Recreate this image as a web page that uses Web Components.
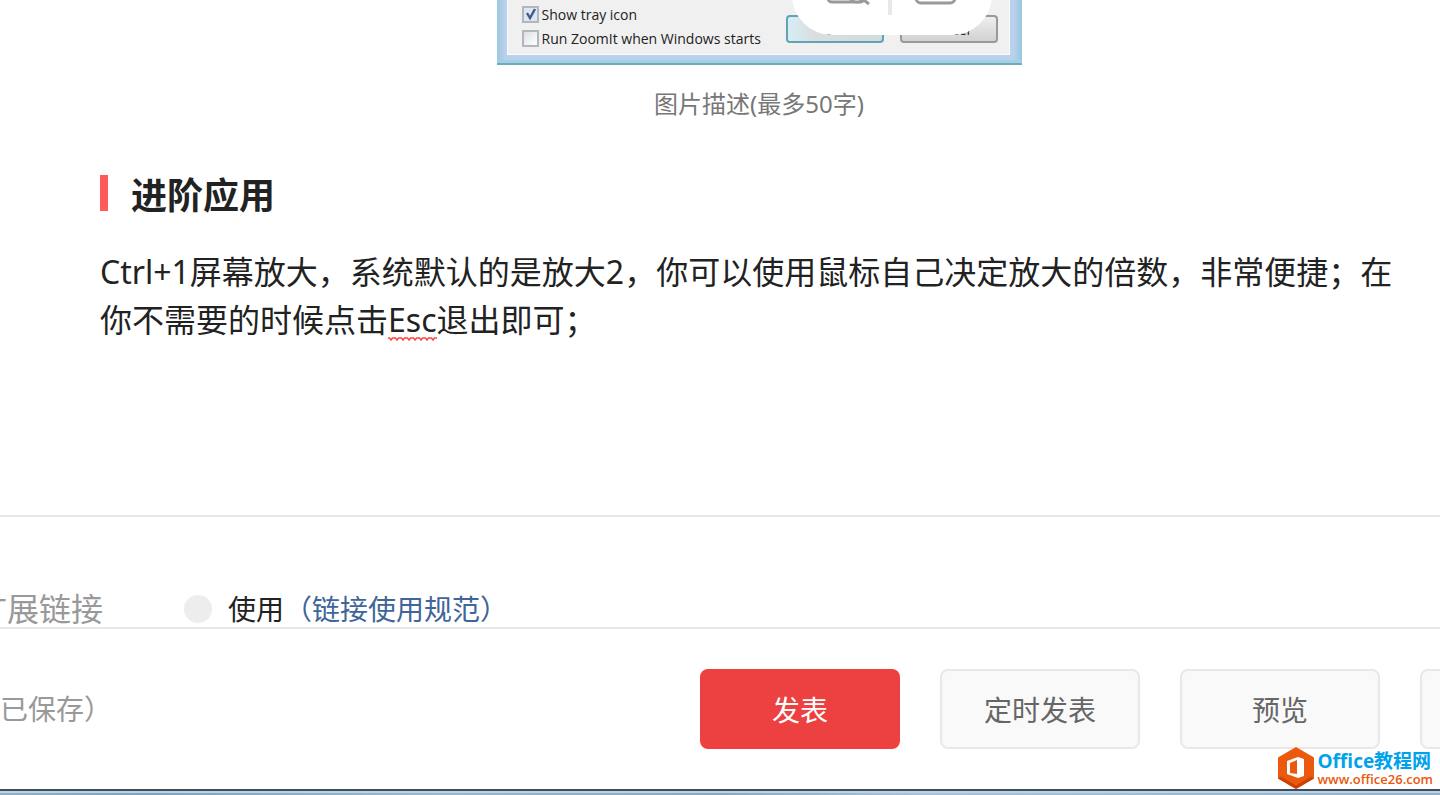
<!DOCTYPE html>
<html lang="zh-CN">
<head>
<meta charset="utf-8">
<title>进阶应用</title>
<style>
  html, body { height: 100%; }
  body {
    margin: 0;
    overflow: hidden;
    background: #fff;
    color: #222;
    font-family: "Noto Sans", "Noto Sans CJK SC", sans-serif;
    text-spacing-trim: space-all;
  }
</style>
</head>
<body>

<template id="editor-page">
  <style>
    :host {
      position: relative;
      display: flex;
      flex-direction: column;
      min-height: 100%;
      overflow: hidden;
    }
    main { flex: 1; padding: 0 22px 0 100px; }
  </style>
  <main><slot></slot></main>
  <slot name="link"></slot>
  <slot name="footer"></slot>
  <slot name="mark"></slot>
</template>

<template id="image-figure">
  <style>
    :host { display: block; }
    figure { margin: 0; display: flex; flex-direction: column; align-items: center; }
    figcaption { margin-top: 21px; font-size: 24px; line-height: 36px; color: #777; }
  </style>
  <figure>
    <slot></slot>
    <figcaption><slot name="caption"></slot></figcaption>
  </figure>
</template>

<template id="zoom-dialog">
  <style>
    :host {
      position: relative;
      display: block;
      box-sizing: border-box;
      width: 525px;
      height: 65px;
      padding: 0 12px 8px 10px;
      background: linear-gradient(90deg, #9cc9e0, #b9d1ea 8px, #b9d1ea 517px, #9cc9e0 523px);
      border-bottom: 2px solid #6cacc0;
      box-shadow: inset 0 -3px #a5cfe2;
      font-family: "Open Sans", sans-serif;
      font-size: 14px;
      color: #222;
    }
    .panel {
      display: flex;
      justify-content: space-between;
      height: 55px;
      padding: 2px 11px 0 14px;
      background: #f0f0f0;
      border: solid #fafafa;
      border-width: 0 1px 1px;
      box-sizing: border-box;
    }
    .options { display: flex; flex-direction: column; }
    label { display: flex; align-items: center; gap: 3px; height: 24px; white-space: nowrap; }
    input {
      appearance: none;
      box-sizing: border-box;
      width: 17px;
      height: 17px;
      margin: 0;
      border: 2px solid #b4b7ba;
      background: linear-gradient(135deg, #dde0e3, #fff);
    }
    input:checked {
      background: url("data:image/svg+xml,%3Csvg xmlns='http://www.w3.org/2000/svg' viewBox='0 0 13 13'%3E%3Cpath d='M3 5l3 5 5-9' fill='none' stroke='%23435a8e' stroke-width='2.4'/%3E%3C/svg%3E") #dde6f3;
    }
    .buttons { display: flex; gap: 16px; padding-top: 13px; }
    button {
      box-sizing: border-box;
      width: 98px;
      height: 28px;
      padding: 0;
      border: 2px solid #999;
      border-radius: 4px;
      background: linear-gradient(#eee, #d2d2d2);
      font: inherit;
      color: inherit;
    }
    button.ok { border-color: #62a3b8; background: linear-gradient(90deg, #d5eef4, #dadddd 30%, #cfdcdf); }
    .tools {
      position: absolute;
      left: 295px;
      bottom: 28px;
      width: 200px;
      height: 80px;
      border-radius: 40px;
      background: #fff;
    }
    .tools svg { display: block; }
  </style>
  <div class="panel">
    <div class="options">
      <label><input type="checkbox" checked>Show tray icon</label>
      <label><input type="checkbox">Run ZoomIt when Windows starts</label>
    </div>
    <div class="buttons">
      <button class="ok">OK</button>
      <button>Cancel</button>
    </div>
  </div>
  <div class="tools">
    <svg width="200" height="80" fill="none" stroke="#999" stroke-width="3">
      <path d="M98 20v40" stroke="#e8e8e8" stroke-width="4"/>
      <rect x="36" y="18" width="36" height="29" rx="4"/>
      <circle cx="65" cy="38" r="9" fill="#fff"/>
      <path d="M69 43l8 6"/>
      <rect x="124" y="18" width="39" height="30" rx="5"/>
    </svg>
  </div>
</template>

<template id="section-title">
  <style>
    :host { display: block; margin-top: 47px; }
    h2 {
      display: flex;
      align-items: center;
      gap: 23px;
      margin: 0;
      font-family: "Noto Sans CJK SC", sans-serif;
      font-size: 36px;
      line-height: 48px;
      font-weight: 700;
    }
    h2::before { content: ""; width: 8px; height: 36px; background: #fb5b5b; }
  </style>
  <h2><slot></slot></h2>
</template>

<template id="text-block">
  <style>
    :host { display: block; margin-top: 31px; }
    p { margin: 0; font-size: 32px; line-height: 48px; }
    ::slotted(u) {
      text-decoration: none;
      background: url("data:image/svg+xml,%3Csvg xmlns='http://www.w3.org/2000/svg' width='6' height='4'%3E%3Cpath d='M0 1h1.500l1.500 2 1.500-2h1.500' fill='none' stroke='%23f44' stroke-width='1.500'/%3E%3C/svg%3E") repeat-x 0 100%;
    }
  </style>
  <p><slot></slot></p>
</template>

<template id="link-row">
  <style>
    :host {
      display: flex;
      align-items: flex-end;
      height: 110px;
      border-top: 2px solid #e8e8e8;
      font-size: 28px;
      line-height: 36px;
      white-space: nowrap;
    }
    .wrap { display: flex; align-items: center; }
    .name { width: 209px; margin-left: -25px; font-size: 32px; color: #999; }
    input {
      appearance: none;
      width: 28px;
      height: 28px;
      margin: 0 16px 0 0;
      border-radius: 50%;
      background: #ededed;
    }
    input:checked { background: #ed4040; }
    a { color: #406599; text-decoration: none; }
  </style>
  <div class="wrap">
    <span class="name"><slot></slot></span>
    <input type="checkbox" id="use">
    <label for="use"><slot name="label"></slot></label>
    <a href="#"><slot name="rule"></slot></a>
  </div>
</template>

<template id="publish-bar">
  <style>
    :host { display: block; }
    footer {
      display: flex;
      justify-content: space-between;
      align-items: center;
      height: 160px;
      border-top: 2px solid #e8e8e8;
    }
    .status { font-size: 28px; line-height: 40px; color: #999; white-space: nowrap; }
    /* the last button runs off the right edge */
    .actions { display: flex; gap: 40px; margin-right: -180px; }
    .edge {
      height: 6px;
      box-sizing: border-box;
      border-top: 2px solid #414d59;
      background: linear-gradient(90deg, #90b0c8, #7fa3bf 10%, #98b8d0 30%, #88a8c2 50%, #a8c4dc 64%, #90b0cc);
      box-shadow: inset 0 2px #bdd3e3;
    }
  </style>
  <footer>
    <span class="status"><slot></slot></span>
    <div class="actions"><slot name="action"></slot></div>
  </footer>
  <div class="edge"></div>
</template>

<template id="action-button">
  <style>
    :host { display: flex; }
    button {
      box-sizing: border-box;
      width: 200px;
      height: 80px;
      padding: 0;
      border: 2px solid #e8e8e8;
      border-radius: 8px;
      background: #f9f9f9;
      color: #666;
      font: inherit;
      font-size: 28px;
    }
    :host([primary]) button { background: #ed4040; border-color: #ed4040; color: #fff; }
  </style>
  <button><slot></slot></button>
</template>

<template id="site-mark">
  <style>
    :host {
      position: absolute;
      right: 7px;
      bottom: 6px;
      display: flex;
      align-items: center;
      gap: 4px;
      white-space: nowrap;
    }
    svg { display: block; }
    .text { display: flex; flex-direction: column; }
    .name { font: 700 19px/22px "Open Sans", "Noto Sans CJK SC", sans-serif; color: #00a2ec; }
    a { font: 600 13px/14px "Open Sans", sans-serif; color: #e8590c; text-decoration: none; }
  </style>
  <svg width="36" height="42" viewBox="0 0 36 42">
    <path d="M18 0l18 10.500v21L18 42 0 31.500v-21z" fill="#eb5a0c"/>
    <path d="M0 31.500L18 42l18-10.500-3-2-15 9-15-9z" fill="#c9420a"/>
    <path fill-rule="evenodd" d="M9 14l11-4 6 2v17l-6 2-11-4zM12 16v10l7 1V13z" fill="#fff"/>
  </svg>
  <div class="text">
    <span class="name"><slot></slot></span>
    <a href="#"><slot name="url"></slot></a>
  </div>
</template>

<editor-page>
  <image-figure>
    <zoom-dialog></zoom-dialog>
    <span slot="caption">图片描述(最多50字)</span>
  </image-figure>
  <section-title>进阶应用</section-title>
  <text-block>Ctrl+1屏幕放大，系统默认的是放大2，你可以使用鼠标自己决定放大的倍数，非常便捷；在你不需要的时候点击<u>Esc</u>退出即可；</text-block>

  <link-row slot="link">扩展链接<span slot="label">使用</span><span slot="rule">（链接使用规范）</span></link-row>

  <publish-bar slot="footer">已保存）<action-button slot="action" primary>发表</action-button><action-button slot="action">定时发表</action-button><action-button slot="action">预览</action-button><action-button slot="action"></action-button></publish-bar>

  <site-mark slot="mark">Office教程网<span slot="url">www.office26.com</span></site-mark>
</editor-page>

<script>
  (function() {
    const tags = [
      'editor-page', 'image-figure', 'zoom-dialog', 'section-title', 'text-block',
      'link-row', 'publish-bar', 'action-button', 'site-mark'
    ];

    tags.forEach(tag => {
      const template = document.getElementById(tag).content;

      window.customElements.define(tag, class extends HTMLElement {
        constructor() {
          super();
          this.attachShadow({ mode: 'open' });
          this.shadowRoot.appendChild(document.importNode(template, true));
        }
      });
    });
  })();
</script>
</body>
</html>
